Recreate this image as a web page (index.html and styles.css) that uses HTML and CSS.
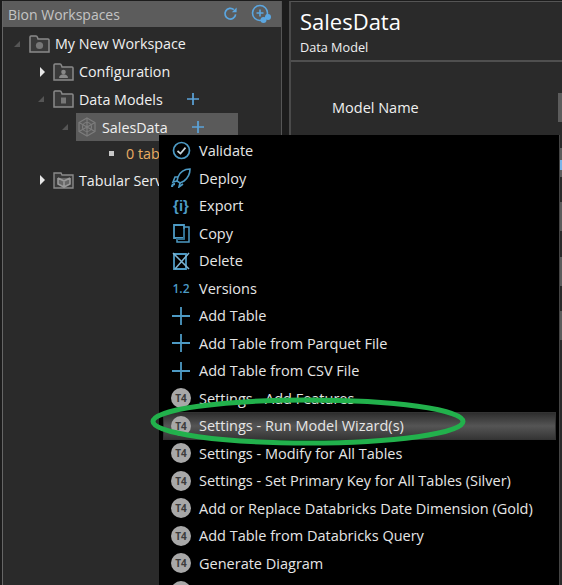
FILE: index.html
```html
<!DOCTYPE html>
<html lang="en">
  <head>
    <meta charset="UTF-8">
    <title>Bion Workspaces</title>
    <link rel="stylesheet" href="styles.css">
  </head>
  <body>
    <svg class="defs" width="0" height="0">
      <symbol id="plus" viewBox="0 0 14 14"><path d="M7 0v14M0 7h14" stroke="#5ba3d9" stroke-width="2" fill="none"/></symbol>
      <symbol id="plusThin" viewBox="0 0 18 18"><path d="M9 0v18M0 9h18" stroke="#4d9ac4" stroke-width="1.800" fill="none"/></symbol>
      <symbol id="folder" viewBox="0 0 21 18"><path d="M1 17V2q0-1 1-1h5q1 0 1.500 1.500L9 4h10q1 0 1 1v12z" fill="#3a3a3a" stroke="#8a8a8a" stroke-width="1.500"/></symbol>
    </svg>

    <div class="app">
      <div class="leftPanel">
        <div class="panelHeader">
          <span class="panelTitle">Bion Workspaces</span>
          <svg class="refreshIcon" width="15" height="16" viewBox="0 0 16 16"><path d="M13.500 8.500A5.700 5.700 0 1 1 11.600 3.400" stroke="#5ba6e0" stroke-width="1.800" fill="none"/><path d="M9.500 6h5V1z" fill="#5ba6e0"/></svg>
          <svg class="addWorkspaceIcon" width="21" height="21" viewBox="0 0 21 21"><circle cx="9" cy="9" r="7.500" stroke="#5ba6e0" stroke-width="1.600" fill="none"/><path d="M9 5.500v7M5.500 9h7" stroke="#5ba6e0" stroke-width="1.600"/><circle cx="12.500" cy="16" r="3" fill="#5ba6e0"/><circle cx="17" cy="13" r="3" fill="#5ba6e0"/></svg>
        </div>
        <div class="tree">
          <div class="treeRow level0">
            <span class="arrow open"></span>
            <svg class="folderIcon" width="21" height="18" viewBox="0 0 21 18"><use href="#folder"/><circle cx="10.500" cy="10.500" r="3.600" fill="#777"/></svg>
            <span>My New Workspace</span>
          </div>
          <div class="treeRow level1">
            <span class="arrow closed"></span>
            <svg class="folderIcon" width="21" height="18" viewBox="0 0 21 18"><use href="#folder"/><circle cx="10.500" cy="9" r="2.300" fill="#888"/><path d="M6 15c0-5 9-5 9 0z" fill="#888"/></svg>
            <span>Configuration</span>
          </div>
          <div class="treeRow level1">
            <span class="arrow open"></span>
            <svg class="folderIcon" width="21" height="18" viewBox="0 0 21 18"><use href="#folder"/><rect x="8" y="7.500" width="5" height="6" fill="#777"/></svg>
            <span>Data Models</span>
            <svg class="treeAdd" width="12" height="12"><use href="#plus"/></svg>
          </div>
          <div class="treeRow level2 selected">
            <span class="arrow open"></span>
            <svg class="modelIcon" width="20" height="20" viewBox="0 0 20 20" fill="none" stroke="#7d7d7d" stroke-width="1.200"><path d="M10 1l8 4.500v9L10 19l-8-4.500v-9z"/><path d="M10 1v18M2 5.500l16 9M18 5.500l-16 9"/><circle cx="10" cy="10" r="4.500"/></svg>
            <span>SalesData</span>
            <svg class="treeAdd wide" width="12" height="12"><use href="#plus"/></svg>
          </div>
          <div class="treeRow level3">
            <span class="bullet"></span>
            <span class="tableCount">0 tables</span>
          </div>
          <div class="treeRow level1">
            <span class="arrow closed"></span>
            <svg class="folderIcon" width="21" height="18" viewBox="0 0 21 18"><path d="M1 17V2h7l1 2h11v13z" fill="#3a3a3a" stroke="#8a8a8a" stroke-width="1.400"/><path d="M5 7l6 3 6-3M11 10v6M5 7v6l6 3 6-3V7" stroke="#999" stroke-width="1.600" fill="#666"/></svg>
            <span>Tabular Services</span>
          </div>
        </div>
      </div>

      <div class="rightPanel">
        <div class="pageHead">
          <div class="pageTitle">SalesData</div>
          <div class="pageSub">Data Model</div>
        </div>
        <div class="fields">
          <div class="fieldRow"><span class="fieldLabel">Model Name</span><span class="fieldBox"></span></div>
          <div class="fieldRow"><span></span><span class="fieldBox focused"></span></div>
          <div class="fieldRow"><span></span><span class="fieldBox"></span></div>
          <div class="fieldRow"><span></span><span class="fieldBox"></span></div>
          <div class="fieldRow"><span></span><span class="fieldBox"></span></div>
        </div>
      </div>
    </div>

    <div class="contextMenu">
      <div class="menuItem">
        <span class="menuIcon"><svg width="19" height="19" viewBox="0 0 19 19" fill="none" stroke="#4d9ac4" stroke-width="1.700"><circle cx="9.500" cy="9.500" r="8"/><path d="M5.500 10l3 2.600 5-6" stroke="#c8d4da"/></svg></span>
        <span>Validate</span>
      </div>
      <div class="menuItem">
        <span class="menuIcon"><svg width="20" height="20" viewBox="0 0 20 20" fill="none" stroke="#4d9ac4" stroke-width="1.600"><path d="M19 1c-6 0-10 3-12 8l-1 4 3 2 4-2c4-3 6-7 6-12z"/><path d="M6 13l-4 1 2-5 3 0M9 15l-1 4 4-3"/><path d="M1 19c0-2 1-3 3-3" stroke-width="2"/></svg></span>
        <span>Deploy</span>
      </div>
      <div class="menuItem">
        <span class="menuIcon braces">{i}</span>
        <span>Export</span>
      </div>
      <div class="menuItem">
        <span class="menuIcon"><svg width="17" height="19" viewBox="0 0 17 19" fill="none" stroke="#4d9ac4" stroke-width="1.800"><path d="M1 1h10v13H1z"/><path d="M11 3h5v15H4v-4" stroke-width="1.500"/><path d="M3 15h8V5" stroke="#2f6d8e"/></svg></span>
        <span>Copy</span>
      </div>
      <div class="menuItem">
        <span class="menuIcon"><svg width="19" height="18" viewBox="0 0 19 18" fill="none" stroke="#4d9ac4" stroke-width="1.800"><path d="M2 2h12v15H2z"/><path d="M1 1l16 16M17 1L3 17" stroke="#7fb5d2" stroke-width="1.500"/></svg></span>
        <span>Delete</span>
      </div>
      <div class="menuItem">
        <span class="menuIcon versionsIcon">1.2</span>
        <span>Versions</span>
      </div>
      <div class="menuItem">
        <span class="menuIcon"><svg width="18" height="18"><use href="#plusThin"/></svg></span>
        <span>Add Table</span>
      </div>
      <div class="menuItem">
        <span class="menuIcon"><svg width="18" height="18"><use href="#plusThin"/></svg></span>
        <span>Add Table from Parquet File</span>
      </div>
      <div class="menuItem">
        <span class="menuIcon"><svg width="18" height="18"><use href="#plusThin"/></svg></span>
        <span>Add Table from CSV File</span>
      </div>
      <div class="menuItem">
        <span class="menuIcon"><span class="t4">T4</span></span>
        <span>Settings - Add Features</span>
      </div>
      <div class="menuItem active">
        <span class="menuIcon"><span class="t4">T4</span></span>
        <span>Settings - Run Model Wizard(s)</span>
      </div>
      <div class="menuItem">
        <span class="menuIcon"><span class="t4">T4</span></span>
        <span>Settings - Modify for All Tables</span>
      </div>
      <div class="menuItem">
        <span class="menuIcon"><span class="t4">T4</span></span>
        <span>Settings - Set Primary Key for All Tables (Silver)</span>
      </div>
      <div class="menuItem">
        <span class="menuIcon"><span class="t4">T4</span></span>
        <span>Add or Replace Databricks Date Dimension (Gold)</span>
      </div>
      <div class="menuItem">
        <span class="menuIcon"><span class="t4">T4</span></span>
        <span>Add Table from Databricks Query</span>
      </div>
      <div class="menuItem">
        <span class="menuIcon"><span class="t4">T4</span></span>
        <span>Generate Diagram</span>
      </div>
      <div class="menuItem">
        <span class="menuIcon"><span class="t4"></span></span>
      </div>
    </div>

    <svg class="annotation" width="326" height="56" viewBox="0 0 326 56"><ellipse cx="159" cy="26.500" rx="155" ry="21.500" fill="none" stroke="#22b14c" stroke-width="5"/></svg>
  </body>
</html>
```

FILE: styles.css
```css
* {
    box-sizing: border-box;
}
html, body {
    height: 100%;
}
body {
    margin: 0;
    overflow: hidden;
    background: #1c1c1c;
    color: #f0f0f0;
    font-family: "Open Sans", "Noto Sans", sans-serif;
    font-size: 14.3px;
}
.defs {
    display: block;
    height: 0;
}
.app {
    display: flex;
    height: 585px;
    padding-top: 1px;
}

/* left tree */
.leftPanel {
    width: 280px;
    margin-left: 2px;
    border-left: 1px solid #666;
    border-right: 1px solid #555;
    background: #2a2a2a;
}
.panelHeader {
    display: flex;
    align-items: center;
    height: 26px;
    padding: 0 9px 0 5px;
    background: #5c5c5c;
}
.panelTitle {
    flex: 1;
    color: #c4c4c4;
    font-size: 14px;
}
.refreshIcon {
    margin-right: 13px;
}
.tree {
    padding-top: 3px;
}
.treeRow {
    display: flex;
    align-items: center;
    height: 27.8px;
    white-space: nowrap;
}
.level0 { padding-left: 11px; }
.level1 { padding-left: 35px; }
.level2 { padding-left: 59px; }
.level3 {
    height: 25px;
    padding-left: 106px;
}
.arrow {
    flex: none;
    width: 0;
    height: 0;
    margin-right: 9px;
}
.arrow.closed {
    margin-left: 2px;
    margin-right: 8px;
    border-left: 5px solid #e8e8e8;
    border-top: 5px solid transparent;
    border-bottom: 5px solid transparent;
}
.arrow.open {
    border-right: 6px solid #555;
    border-top: 6px solid transparent;
}
.folderIcon {
    flex: none;
    margin-right: 5px;
}
.modelIcon {
    flex: none;
    margin-right: 5px;
}
.selected {
    position: relative;
}
.selected::before {
    content: "";
    position: absolute;
    left: 73px;
    top: 0;
    width: 162px;
    height: 28px;
    background: #5a5a5a;
}
.selected > * {
    position: relative;
}
.treeAdd {
    margin-left: 24px;
}
.bullet {
    width: 5px;
    height: 5px;
    margin-right: 12px;
    background: #c8c8c8;
}
.tableCount {
    color: #e9ad62;
}

.rightPanel {
    flex: 1;
    margin-left: 7px;
    border-left: 2px solid #4a4a4a;
    border-top: 1px solid #555;
    background: #2a2a2a;
}
.pageHead {
    height: 60px;
    padding: 4px 0 0 9px;
    border-bottom: 2px solid #4f4f4f;
}
.pageTitle {
    font-size: 22px;
    line-height: 30px;
    color: #fff;
}
.pageSub {
    margin-top: 2px;
    font-size: 12.7px;
    line-height: 18px;
}
.fields {
    display: flex;
    flex-direction: column;
    gap: 25.5px;
    padding: 31px 0 0 41px;
}
.fieldRow {
    display: flex;
    justify-content: space-between;
    align-items: center;
    height: 29px;
}
.fieldLabel {
    font-size: 14.5px;
}
.fieldBox {
    width: 4px;
    height: 29px;
    background: #5c5c5c;
}
.fieldBox.focused {
    background: linear-gradient(#5c5c5c 12px, #7ab4e8 12px, #7ab4e8 22px, #5c5c5c 22px);
}

/* popup */
.contextMenu {
    position: absolute;
    left: 159px;
    top: 135px;
    width: 401px;
    height: 450px;
    padding: 2px 3px 0 4px;
    overflow: hidden;
    background: #000;
    border-right: 1px solid #444;
    font-size: 14.5px;
}
.menuItem {
    display: flex;
    align-items: center;
    height: 27.5px;
    white-space: nowrap;
    color: #e6e6e6;
}
.menuItem.active {
    box-shadow: inset 0 0 0 1px #333;
    background: linear-gradient(#2a2a2a, #555 50%, #333);
}
.menuIcon {
    flex: none;
    display: flex;
    justify-content: center;
    align-items: center;
    width: 36px;
}
.braces {
    font-family: "Liberation Sans", sans-serif;
    font-size: 15px;
    font-weight: bold;
    color: #4d9ac4;
}
.versionsIcon {
    font-size: 12px;
    color: #4d9ac4;
    font-weight: 600;
}
.t4 {
    display: flex;
    justify-content: center;
    align-items: center;
    width: 20px;
    height: 20px;
    border-radius: 50%;
    background: #a8a8a8;
    color: #3c3c3c;
    font-size: 10px;
    font-weight: bold;
}
.annotation {
    position: absolute;
    left: 149px;
    top: 395px;
}
```
